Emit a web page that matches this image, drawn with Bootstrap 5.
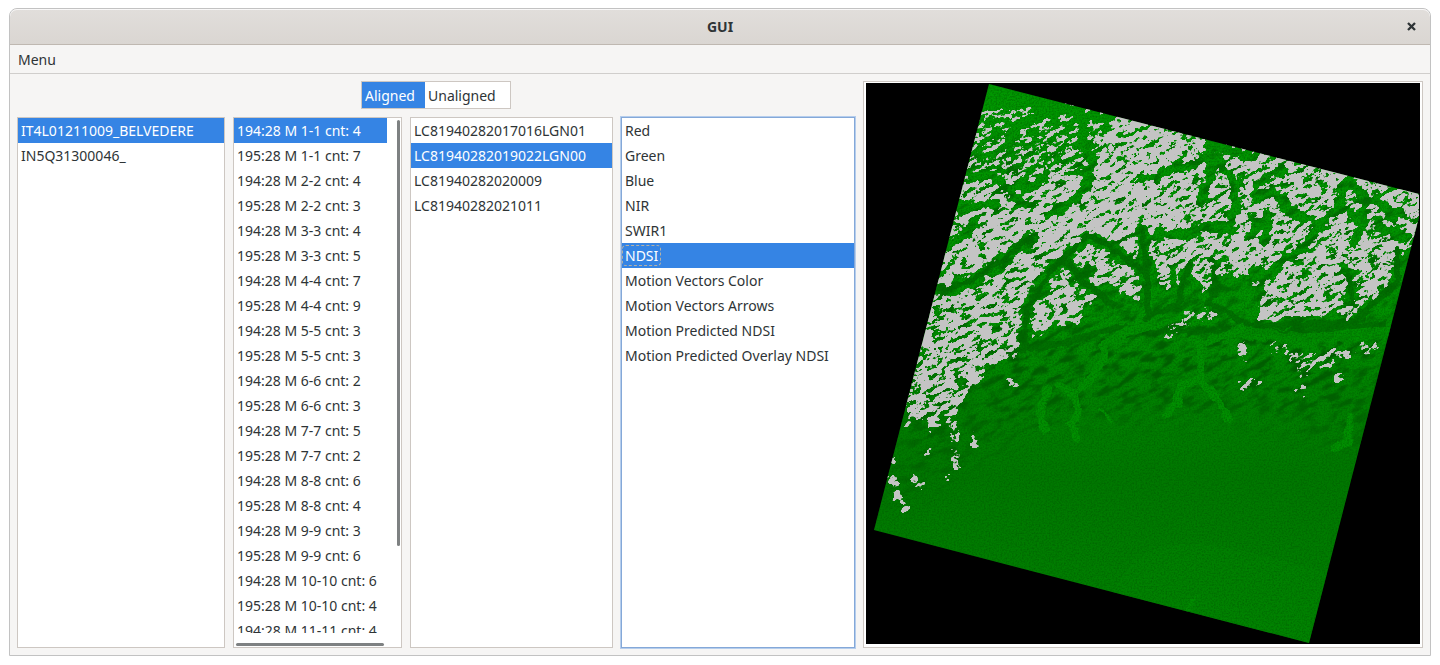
<!DOCTYPE html>
<html lang="en">
<head>
<meta charset="utf-8">
<meta name="viewport" content="width=device-width, initial-scale=1">
<title>GUI</title>
<link href="https://cdn.jsdelivr.net/npm/bootstrap@5.3.0/dist/css/bootstrap.min.css" rel="stylesheet">
<style>
  :root { --edge: #cdc7c2; --accent: #3584e4; --ink: #2e3436; }
  body { font-family: "Noto Sans", sans-serif; font-size: 14px; line-height: 25px; color: var(--ink); background: #fff; padding: 8px 9px 9px; }
  .app-window { border: 1px solid #c2c2c2; border-radius: 8px 8px 0 0; background: #f6f5f4; min-width: 0; }
  .title-bar { height: 36px; border-bottom: 1px solid #bfb8b1; border-radius: 7px 7px 0 0; background: linear-gradient(#e1dedb, #dad6d2); box-shadow: inset 0 1px #f9f8f8; }
  .title-bar h1 { font-size: 14px; font-weight: 700; line-height: 35px; }
  .close-btn { right: 13px; line-height: 0; color: var(--ink); }
  .menu-bar { height: 29px; border-bottom: 1px solid #d0cecc; padding: 2px 8px; }
  .menu-bar a { color: inherit; }
  .work-area { padding: 7px; gap: 8px; grid-template: minmax(0, 1fr) / minmax(0, 838fr) minmax(0, 560fr); }
  .lists-side { gap: 8px; }
  .lists-row { gap: 8px; min-height: 0; grid-template: minmax(0, 1fr) / 208fr 169fr 203fr 234fr; }
  .pane { border: 1px solid var(--edge); background: #fff; min-width: 0; }
  .pane-paths { padding: 0 14px 14px 0; }
  .pane-bands { border-color: #84a8d8; box-shadow: 0 0 0 1px #b5cdec; }
  .pane-image { padding: 1px 2px 3px; }
  .toggle-box { height: 28px; width: 150px; }
  .list-group { --bs-list-group-border-radius: 0; --bs-list-group-border-width: 0; --bs-list-group-item-padding-x: 3px; --bs-list-group-item-padding-y: 0; --bs-list-group-color: var(--ink); --bs-list-group-action-color: var(--ink); --bs-list-group-active-bg: var(--accent); }
  .list-group-item { white-space: nowrap; overflow: hidden; }
  .toggle-box .list-group-item { width: auto; line-height: 28px; }
  .toggle-box .active { flex: 0 0 63px; }
  .focus-box { outline: 1px dashed #b5b1a5; outline-offset: 2px; border-radius: 1px; display: inline-block; line-height: 15px; }
  .thumb { background: #7e8182; border-radius: 2px; position: absolute; }
  .thumb-v { width: 3px; right: 1px; top: 2px; height: 80.5%; }
  .thumb-h { height: 3px; left: 2px; bottom: 1px; width: 88.5%; }
</style>
</head>
<body class="vh-100 d-flex flex-column">
<main class="app-window flex-grow-1 d-flex flex-column overflow-hidden">
  <header class="title-bar d-flex align-items-center position-relative">
    <h1 class="m-0 w-100 text-center">GUI</h1>
    <button type="button" class="close-btn btn p-0 border-0 position-absolute" aria-label="Close">
      <svg width="11" height="11" viewBox="0 0 11 11"><path d="M2 2L9 9M9 2L2 9" stroke="currentColor" stroke-width="2.3"/></svg>
    </button>
  </header>
  <nav class="menu-bar"><a href="#" class="text-decoration-none">Menu</a></nav>
  <div class="work-area d-grid flex-grow-1 overflow-hidden">
    <div class="lists-side d-flex flex-column">
      <div class="pane toggle-box align-self-center list-group list-group-horizontal">
        <button type="button" class="list-group-item list-group-item-action active">Aligned</button>
        <button type="button" class="list-group-item list-group-item-action">Unaligned</button>
      </div>
      <div class="lists-row d-grid flex-grow-1">
        <div class="pane list-group">
          <button type="button" class="list-group-item list-group-item-action active">IT4L01211009_BELVEDERE</button>
          <button type="button" class="list-group-item list-group-item-action">IN5Q31300046_</button>
        </div>
        <div class="pane pane-paths position-relative">
          <div class="list-group h-100 overflow-hidden d-block">
            <button type="button" class="list-group-item list-group-item-action active">194:28 M 1-1 cnt: 4</button>
            <button type="button" class="list-group-item list-group-item-action">195:28 M 1-1 cnt: 7</button>
            <button type="button" class="list-group-item list-group-item-action">194:28 M 2-2 cnt: 4</button>
            <button type="button" class="list-group-item list-group-item-action">195:28 M 2-2 cnt: 3</button>
            <button type="button" class="list-group-item list-group-item-action">194:28 M 3-3 cnt: 4</button>
            <button type="button" class="list-group-item list-group-item-action">195:28 M 3-3 cnt: 5</button>
            <button type="button" class="list-group-item list-group-item-action">194:28 M 4-4 cnt: 7</button>
            <button type="button" class="list-group-item list-group-item-action">195:28 M 4-4 cnt: 9</button>
            <button type="button" class="list-group-item list-group-item-action">194:28 M 5-5 cnt: 3</button>
            <button type="button" class="list-group-item list-group-item-action">195:28 M 5-5 cnt: 3</button>
            <button type="button" class="list-group-item list-group-item-action">194:28 M 6-6 cnt: 2</button>
            <button type="button" class="list-group-item list-group-item-action">195:28 M 6-6 cnt: 3</button>
            <button type="button" class="list-group-item list-group-item-action">194:28 M 7-7 cnt: 5</button>
            <button type="button" class="list-group-item list-group-item-action">195:28 M 7-7 cnt: 2</button>
            <button type="button" class="list-group-item list-group-item-action">194:28 M 8-8 cnt: 6</button>
            <button type="button" class="list-group-item list-group-item-action">195:28 M 8-8 cnt: 4</button>
            <button type="button" class="list-group-item list-group-item-action">194:28 M 9-9 cnt: 3</button>
            <button type="button" class="list-group-item list-group-item-action">195:28 M 9-9 cnt: 6</button>
            <button type="button" class="list-group-item list-group-item-action">194:28 M 10-10 cnt: 6</button>
            <button type="button" class="list-group-item list-group-item-action">195:28 M 10-10 cnt: 4</button>
            <button type="button" class="list-group-item list-group-item-action">194:28 M 11-11 cnt: 4</button>
          </div>
          <span class="thumb thumb-v"></span>
          <span class="thumb thumb-h"></span>
        </div>
        <div class="pane list-group">
          <button type="button" class="list-group-item list-group-item-action">LC81940282017016LGN01</button>
          <button type="button" class="list-group-item list-group-item-action active">LC81940282019022LGN00</button>
          <button type="button" class="list-group-item list-group-item-action">LC81940282020009</button>
          <button type="button" class="list-group-item list-group-item-action">LC81940282021011</button>
        </div>
        <div class="pane pane-bands list-group">
          <button type="button" class="list-group-item list-group-item-action">Red</button>
          <button type="button" class="list-group-item list-group-item-action">Green</button>
          <button type="button" class="list-group-item list-group-item-action">Blue</button>
          <button type="button" class="list-group-item list-group-item-action">NIR</button>
          <button type="button" class="list-group-item list-group-item-action">SWIR1</button>
          <button type="button" class="list-group-item list-group-item-action active"><span class="focus-box">NDSI</span></button>
          <button type="button" class="list-group-item list-group-item-action">Motion Vectors Color</button>
          <button type="button" class="list-group-item list-group-item-action">Motion Vectors Arrows</button>
          <button type="button" class="list-group-item list-group-item-action">Motion Predicted NDSI</button>
          <button type="button" class="list-group-item list-group-item-action">Motion Predicted Overlay NDSI</button>
        </div>
      </div>
    </div>
    <div class="pane pane-image d-flex">
      <svg class="w-100 h-100 bg-black" viewBox="0 0 554 561" role="img" aria-label="NDSI scene">
        <defs>
          <clipPath id="scene"><path d="M123 1L553 111V134L443 560L8 447Z"/></clipPath>
          <linearGradient id="ground" x1="0" y1="0" x2="0" y2="1">
            <stop offset="0" stop-color="#009800"/><stop offset=".42" stop-color="#009200"/>
            <stop offset=".55" stop-color="#008200"/><stop offset=".7" stop-color="#007800"/><stop offset="1" stop-color="#008200"/>
          </linearGradient>
          <!-- slope shading: directional noise, fading to flat ground -->
          <filter id="relief" filterUnits="userSpaceOnUse" x="-350" y="-50" width="1000" height="1000" color-interpolation-filters="sRGB">
            <feTurbulence type="fractalNoise" baseFrequency=".06 .15" numOctaves="5" seed="8"/>
            <feColorMatrix values="0 0 0 0 0  0 0 0 0 .37  0 0 0 0 0  4 0 0 0 -1.8" result="n"/>
            <feGaussianBlur in="SourceGraphic" stdDeviation="12" result="d"/>
            <feComposite in="n" in2="d" operator="in"/>
          </filter>
          <filter id="grain" filterUnits="userSpaceOnUse" x="0" y="0" width="554" height="561" color-interpolation-filters="sRGB">
            <feTurbulence type="fractalNoise" baseFrequency=".6" numOctaves="2" seed="2"/>
            <feColorMatrix values="0 0 0 0 0  0 0 0 0 .35  0 0 0 0 0  1.2 0 0 0 -.45"/>
          </filter>
          <filter id="rough" filterUnits="userSpaceOnUse" x="0" y="0" width="554" height="561">
            <feTurbulence type="fractalNoise" baseFrequency=".09" numOctaves="3" seed="4" result="w"/>
            <feDisplacementMap in="SourceGraphic" in2="w" scale="8" xChannelSelector="R" yChannelSelector="G"/>
            <feGaussianBlur stdDeviation=".6"/>
          </filter>
          <!-- snow: density drawing plus directional noise, cut at a threshold -->
          <filter id="snow" filterUnits="userSpaceOnUse" x="-350" y="-50" width="1000" height="1000" color-interpolation-filters="sRGB">
            <feTurbulence type="fractalNoise" baseFrequency=".08" numOctaves="4" seed="4" result="w"/>
            <feDisplacementMap in="SourceGraphic" in2="w" scale="15" xChannelSelector="R" yChannelSelector="G"/>
            <feGaussianBlur stdDeviation="1" result="d"/>
            <feTurbulence type="fractalNoise" baseFrequency=".09 .22" numOctaves="5" seed="11"/>
            <feColorMatrix values="1 0 0 0 0  0 1 0 0 0  0 0 1 0 0  0 0 0 0 1" result="n"/>
            <feTurbulence type="fractalNoise" baseFrequency=".45" numOctaves="1" seed="5"/>
            <feColorMatrix values="1 0 0 0 0  0 1 0 0 0  0 0 1 0 0  0 0 0 0 1" result="f"/>
            <feComposite in="n" in2="f" operator="arithmetic" k2="1" k3=".5" k4="-.25" result="m"/>
            <feComposite in="d" in2="m" operator="arithmetic" k2=".65" k3="1" k4="-.25"/>
            <feColorMatrix values="0 0 0 0 .77  0 0 0 0 .77  0 0 0 0 .77  22 0 0 0 -16.9"/>
          </filter>
        </defs>
        <g clip-path="url(#scene)">
          <rect width="554" height="561" fill="url(#ground)"/>
          <g transform="rotate(-27)" filter="url(#relief)"><g transform="rotate(27)">
            <path d="M80 60H560V160L500 375L370 335L180 340L90 390L20 430L50 260Z" opacity=".7"/>
            <path d="M100 265L280 235L520 245L480 325L300 320L130 340Z"/>
          </g></g>
          <g filter="url(#rough)" fill="none" stroke="#006800" stroke-width="6" stroke-linejoin="round" opacity=".75">
            <path d="M71 205L101 199L134 179L171 149M157 272L161 225L184 189L221 152L247 165L281 192V240M199 178L215 195L226 180M214 195L250 225M276 149L281 192M354 199L341 219L387 243L427 242L487 239L531 199V165M324 179L311 222L281 232M347 179L350 215M480 190L487 220L500 235M120 270L190 262L250 245L420 250L520 240"/>
          </g>
          <g filter="url(#rough)" fill="none" stroke="#009000" stroke-width="8" stroke-linejoin="round" stroke-linecap="round">
            <path d="M286 243L261 248L238 262V277L221 300L207 310L214 328L205 340L211 355M194 304L207 310M181 307L174 328L179 348M334 262V277L337 300L354 320L362 335M337 292L314 304L311 320L301 332M374 248L341 258M484 335L482 358L468 366"/>
            <path d="M370 248L430 257L520 249" stroke-width="12" opacity=".8"/>
            <path d="M234 326L246 338M330 510L320 530" stroke-width="3"/>
          </g>
          <path d="M230 561C260 430 320 450 480 495L443 561Z" fill="#008800" opacity=".35"/>
          <rect width="554" height="561" filter="url(#grain)"/>
          <g transform="rotate(-27)" filter="url(#snow)"><g transform="rotate(27)">
            <rect x="-60" y="-60" width="700" height="700" fill="#000"/>
            <path d="M112 25L190 25L194 10L284 30L580 105L546 160L530 200L501 222L480 234L425 234L387 240L400 205L357 190L335 215L325 190L300 218L280 165L282 232L262 215L240 200L218 235L181 248L165 262L120 290L70 345L35 325L50 260L70 190Z" fill="#eee"/>
            <path d="M112 25H250L225 90L90 100Z" fill="#bfbfbf"/>
            <path d="M160 130L240 80L330 60L290 150L190 170L90 195L95 150Z" fill="#fff"/>
            <path d="M50 280L125 275L115 300L70 320L38 345Z" fill="#eee"/>
            <path d="M65 310V350M80 300L90 358M60 365L68 375M88 368L92 385M25 375L29 382M24 392L34 415L40 430M45 395L58 405M83 390L80 398M105 350L112 365M140 302L152 300" fill="none" stroke="#e4e4e4" stroke-width="10"/>
            <path d="M405 265L440 278L515 262M430 290L470 275M300 256L322 232L350 230M372 260L382 280M375 298L392 302M432 302L440 310M465 290L480 296" fill="none" stroke="#c6c6c6" stroke-width="13"/>
            <g fill="none" stroke="#222" stroke-width="7" stroke-linejoin="round">
              <path d="M71 207L101 201L134 181L171 151M157 272L161 225L184 189L221 156L247 165L281 192M276 145L281 240M200 178L215 195L226 180M214 195L250 225L275 235" stroke-width="9"/>
              <path d="M214 25L217 59L227 82L214 115L180 135M101 92L127 92L144 105L180 98M141 65L154 42L181 29L250 35M144 105L160 125M90 125L130 120M80 165L110 140"/>
              <path d="M274 99L307 85L351 72L371 102L367 142L334 146L281 156M351 72L340 100L335 125M387 115L402 108L417 115L422 130L450 135M400 125V160M388 150L398 130"/>
              <path d="M420 85L385 105M481 95L471 125L447 152L411 187L354 201M481 95L501 115L541 137M501 115L487 165M511 145L545 155M324 179L311 222M307 182L304 220M347 175L352 215M531 165V199L487 239M478 180L490 225M340 60L390 75"/>
            </g>
            <path d="M123 -9L190 8L200 22L115 22Z" fill="#000"/>
          </g></g>
        </g>
      </svg>
    </div>
  </div>
</main>
<script src="https://cdn.jsdelivr.net/npm/bootstrap@5.3.0/dist/js/bootstrap.bundle.min.js"></script>
</body>
</html>
